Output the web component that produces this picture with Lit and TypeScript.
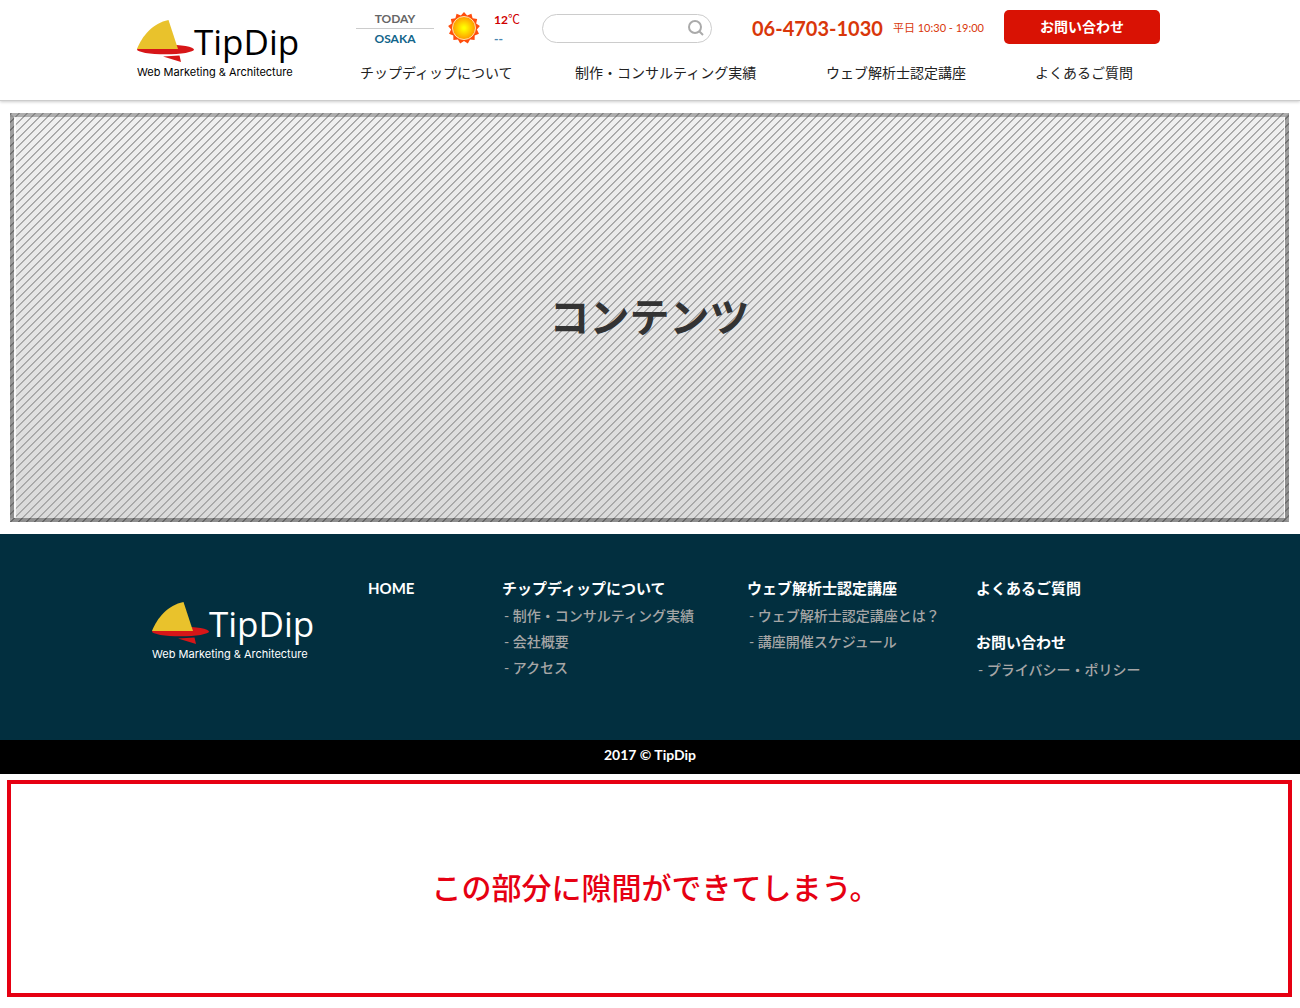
import { LitElement, html, css, svg } from "lit";
import { customElement } from "lit/decorators.js";

@customElement("tipdip-logo")
export class TipdipLogo extends LitElement {
  static styles = css`
    :host { display: block; flex: none; }
    .logo { display: block; color: inherit; }
    svg { display: block; }
    .name { font: 400 35px "Open Sans", "Noto Sans", sans-serif; }
    .tag { font: 400 11px Inter, sans-serif; }
  `;

  render() {
    return html`<a class="logo" href="#" aria-label="TipDip">
      <svg width="164" height="62" viewBox="0 0 164 62" fill="currentColor">
        <ellipse cx="28.500" cy="31.500" rx="28.500" ry="4.800" fill="#d71618" />
        <path d="M0 31C5 18 16 5 31.500 2L41 31z" fill="#e9c22c" />
        <path d="M26 38.500l16.500-1 1.500 6.500z" fill="#d71618" />
        <text class="name" x="57" y="37">TipDip</text>
        <text class="tag" x="0" y="58">Web Marketing &amp; Architecture</text>
      </svg>
    </a>`;
  }
}

@customElement("app-root")
export class AppRoot extends LitElement {
  static styles = css`
    :host {
      display: block;
      background: #fff;
      color: #222;
      font-family: Lato, "Noto Sans CJK JP", sans-serif;
      font-size: 14px;
      line-height: 20px;
    }
    * { box-sizing: border-box; }
    a { color: inherit; text-decoration: none; }
    ul, h2, p { margin: 0; padding: 0; list-style: none; font-weight: inherit; font-size: inherit; }

    .header { border-bottom: 1px solid #ccc; box-shadow: 0 1px 3px #ccc; }
    .header-inner {
      display: flex;
      max-width: 1026px;
      min-height: 100px;
      margin: 0 auto;
      padding-top: 10px;
      gap: 55px;
    }
    .header-inner tipdip-logo { color: #000; padding-top: 8px; }
    .header-main { flex: 1; display: flex; flex-direction: column; gap: 15px; }
    .tools { display: flex; align-items: flex-start; padding-right: 3px; }
    .place { width: 78px; text-align: center; font-size: 12px; font-weight: 700; line-height: 18px; }
    .today { color: #666; border-bottom: 1px solid #ccc; }
    .osaka { color: #12658a; padding-top: 1px; }
    .sun { display: block; margin: 1px 14px 0; }
    .temps { width: 48px; font-size: 12px; line-height: 19px; color: #d00000; }
    .low { color: #4a86b0; font-weight: 900; }
    .search {
      display: flex;
      align-items: center;
      width: 170px;
      height: 29px;
      margin-top: 4px;
      padding: 0 7px 0 12px;
      border: 1px solid #ccc;
      border-radius: 15px;
    }
    .search input { flex: 1; min-width: 0; border: 0; outline: 0; background: none; font: inherit; }
    .search button { display: block; padding: 0; border: 0; background: none; }
    .search svg { display: block; }
    .phone { display: flex; align-items: center; gap: 10px; margin-left: 40px; height: 36px; color: #d9370a; }
    .number { font-size: 20px; font-weight: 700; }
    .hours { font-size: 11px; white-space: nowrap; }
    .contact {
      width: 156px;
      margin-left: auto;
      border-radius: 5px;
      background: #d91204;
      color: #fff;
      text-align: center;
      font-weight: 700;
      line-height: 34px;
    }
    .nav { display: grid; grid-template-columns: 215px 251px 209px auto; padding-left: 4px; white-space: nowrap; }

    .main { padding: 12px 11px 12px 10px; }
    .content {
      display: grid;
      place-items: center;
      height: 409px;
      padding-bottom: 2px;
      border: 4px solid;
      border-color: #0003 #0005 #0006 #0005;
      box-shadow: inset 2px 0 #fffc, inset -1px 0 #fffc;
      background:
        linear-gradient(135deg, #a6a6a6 12%, #0000 16% 50%, #a6a6a6 50% 62%, #0000 66%) 0 0 / 8px 8px,
        linear-gradient(#f0f0f0, #dadada);
      color: #333;
      font-size: 40px;
      font-weight: 700;
      line-height: 60px;
    }

    .footer { background: #022f3f; color: #fff; }
    .footer-inner { display: flex; max-width: 996px; min-height: 206px; margin: 0 auto; padding-top: 44px; }
    .footer tipdip-logo { padding-top: 22px; color: #fff; }
    .columns {
      flex: 1;
      display: grid;
      grid-template-columns: 134px 245px 229px auto;
      align-items: start;
      padding-left: 52px;
      white-space: nowrap;
      font-weight: 700;
    }
    .group h2 { font-size: 15px; line-height: 21px; font-weight: 700; }
    .group ul { padding: 4px 0 0 2px; color: #a6a6a6; font-weight: 500; }
    .group li { line-height: 26px; }
    .stack { display: grid; gap: 33px; }
    .copyright { padding-bottom: 4px; background: #000; color: #fff; text-align: center; font-size: 14px; font-weight: 700; line-height: 30px; }

    .gap {
      display: grid;
      place-items: center;
      height: 217px;
      margin: 6px 8px 11px 7px;
      padding: 0 0 3px 12px;
      border: 4px solid #e60012;
      color: #e60012;
      font-size: 30px;
      font-weight: 500;
      line-height: 44px;
    }
  `;

  group(title: string, items: string[] = []) {
    return html`<div class="group">
      <h2><a href="#">${title}</a></h2>
      ${items.length ? html`<ul>${items.map((i) => html`<li><a href="#">- ${i}</a></li>`)}</ul>` : ""}
    </div>`;
  }

  sun() {
    const points = Array.from({ length: 26 }, (_, i) => {
      const r = i % 2 ? 13 : 16;
      const a = (i * Math.PI) / 13 - Math.PI / 2;
      return `${16 + r * Math.cos(a)},${16 + r * Math.sin(a)}`;
    }).join(" ");
    return html`<svg class="sun" width="32" height="34" viewBox="0 0 32 32" role="img" aria-label="晴れ">
      <defs><radialGradient id="glow"><stop offset="0.100" stop-color="#ffff00" /><stop offset="1" stop-color="#ff9800" /></radialGradient></defs>
      ${svg`<polygon points=${points} fill="#ff4d0c" />`}
      <circle cx="16" cy="16" r="11.500" fill="url(#glow)" stroke="#ffe3b0" />
    </svg>`;
  }

  render() {
    return html`
      <header class="header">
        <div class="header-inner">
          <tipdip-logo></tipdip-logo>
          <div class="header-main">
            <div class="tools">
              <div class="place"><p class="today">TODAY</p><p class="osaka">OSAKA</p></div>
              ${this.sun()}
              <div class="temps"><p><b>12</b>℃</p><p class="low">--</p></div>
              <form class="search" role="search">
                <input type="text" aria-label="検索" />
                <button type="button" aria-label="検索する">
                  <svg width="17" height="17" viewBox="0 0 17 17" fill="none" stroke="#aaa" stroke-width="2">
                    <circle cx="8" cy="7" r="6" /><path d="M12 11l4 4" />
                  </svg>
                </button>
              </form>
              <div class="phone"><a class="number" href="tel:06-4703-1030">06-4703-1030</a><span class="hours">平日 10:30 - 19:00</span></div>
              <a class="contact" href="#">お問い合わせ</a>
            </div>
            <nav class="nav">
              <a href="#">チップディップについて</a>
              <a href="#">制作・コンサルティング実績</a>
              <a href="#">ウェブ解析士認定講座</a>
              <a href="#">よくあるご質問</a>
            </nav>
          </div>
        </div>
      </header>
      <main class="main"><div class="content">コンテンツ</div></main>
      <footer class="footer">
        <div class="footer-inner">
          <tipdip-logo></tipdip-logo>
          <div class="columns">
            ${this.group("HOME")}
            ${this.group("チップディップについて", ["制作・コンサルティング実績", "会社概要", "アクセス"])}
            ${this.group("ウェブ解析士認定講座", ["ウェブ解析士認定講座とは？", "講座開催スケジュール"])}
            <div class="stack">
              ${this.group("よくあるご質問")}
              ${this.group("お問い合わせ", ["プライバシー・ポリシー"])}
            </div>
          </div>
        </div>
        <p class="copyright">2017 © TipDip</p>
      </footer>
      <div class="gap">この部分に隙間ができてしまう。</div>
    `;
  }
}
